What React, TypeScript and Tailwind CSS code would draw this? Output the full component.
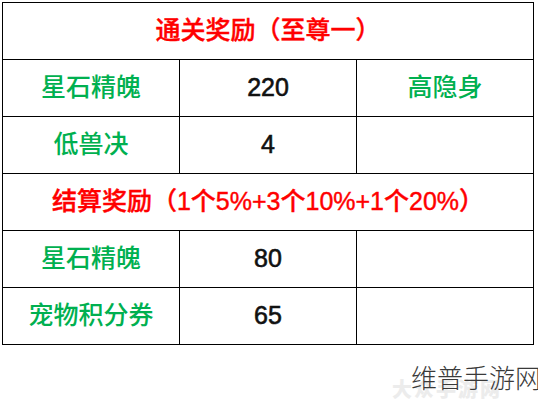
const font = "font-['Liberation_Sans','Noto_Sans_CJK_SC',sans-serif]";

type Row =
  | { kind: "title"; text: string }
  | { kind: "item"; name: string; value: string; extra?: string };

const rows: Row[] = [
  { kind: "title", text: "通关奖励（至尊一）" },
  { kind: "item", name: "星石精魄", value: "220", extra: "高隐身" },
  { kind: "item", name: "低兽决", value: "4" },
  { kind: "title", text: "结算奖励（1个5%+3个10%+1个20%）" },
  { kind: "item", name: "星石精魄", value: "80" },
  { kind: "item", name: "宠物积分券", value: "65" },
];

const cell = "h-[57px] flex items-center justify-center border-r border-b border-black text-[25px]";

export default function App() {
  return (
    <div className={`relative w-[538px] h-[400px] bg-white overflow-hidden ${font}`}>
      <div className="ml-[2px] pt-[2px] w-[532px]">
        <div className="grid grid-cols-3 border-l border-t border-black">
          {rows.map((row, i) =>
            row.kind === "title" ? (
              <div
                key={i}
                className={`col-span-3 ${cell} font-medium text-[#ff0000] [-webkit-text-stroke:0.4px_#ff0000]`}
              >
                {row.text}
              </div>
            ) : (
              <>
                <div key={i + "a"} className={`${cell} font-medium text-[#00b050]`}>
                  {row.name}
                </div>
                <div
                  key={i + "b"}
                  className={`${cell} text-[#111] [-webkit-text-stroke:0.6px_#111]`}
                >
                  {row.value}
                </div>
                <div key={i + "c"} className={`${cell} font-medium text-[#00b050]`}>
                  {row.extra ?? ""}
                </div>
              </>
            )
          )}
        </div>
      </div>

      {/* watermark */}
      <div className="absolute left-[392px] top-[374px] text-[20px] font-black text-[#ececec] tracking-[2px] font-['Noto_Sans_CJK_SC',sans-serif]">
        大众手游网
      </div>
      <div className="absolute left-[411px] top-[359px] text-[26px] font-light leading-[36px] text-[#3a3a3a] whitespace-nowrap font-['Noto_Sans_CJK_SC',sans-serif]">
        维普手游网
      </div>
    </div>
  );
}
